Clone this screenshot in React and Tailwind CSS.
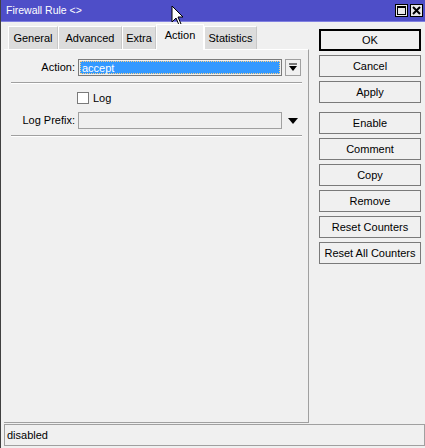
import React from 'react';

const tabs = [
  { label: 'General', w: 'w-[50px]' },
  { label: 'Advanced', w: 'w-[64px]' },
  { label: 'Extra', w: 'w-[34px]' },
  { label: 'Action', w: 'w-[48px]' },
  { label: 'Statistics', w: 'w-[53px]' },
];

const buttons = [
  { label: 'OK', primary: true },
  { label: 'Cancel' },
  { label: 'Apply', gapAfter: true },
  { label: 'Enable' },
  { label: 'Comment' },
  { label: 'Copy' },
  { label: 'Remove' },
  { label: 'Reset Counters' },
  { label: 'Reset All Counters' },
];

const Cursor = () => (
  <svg className="absolute left-[170px] top-[5px]" width="14" height="22" viewBox="0 0 14 22">
    <path d="M1 1 L1 17 L5 13 L8 20 L10 19 L7 12 L12 12 Z" fill="#fff" stroke="#000" strokeWidth="1" />
  </svg>
);

export default function App() {
  return (
    <div className="relative w-[425px] h-[448px] bg-[#f0f0f0] text-[11px] text-black overflow-hidden border-l border-[#404040]" style={{ fontFamily: '"Liberation Sans", Arial, sans-serif' }}>
      {/* title bar */}
      <div className="h-[22px] bg-[#4e4ec8] flex items-center justify-between pl-[5px] pr-[2px] border-b border-[#8080e0]">
        <span className="text-white text-[10.5px]">Firewall Rule &lt;&gt;</span>
        <div className="flex gap-[2px]">
          <div className="w-[13px] h-[13px] bg-[#e8e8e8] border border-black flex items-center justify-center">
            <div className="w-[9px] h-[9px] border border-black border-t-2" />
          </div>
          <div className="w-[13px] h-[13px] bg-[#e8e8e8] border border-black flex items-center justify-center">
            <svg width="9" height="9" viewBox="0 0 9 9">
              <path d="M1 1 L8 8 M8 1 L1 8" stroke="#000" strokeWidth="2" />
            </svg>
          </div>
        </div>
      </div>
      <Cursor />

      <div className="flex">
        {/* left: tabs + panel */}
        <div className="w-[308px] pl-[3px]">
          <div className="flex items-end h-[27px] pl-[4px]">
            {tabs.map((t) =>
              t.label === 'Action' ? (
                <div key={t.label} className={t.w + ' h-[26px] flex items-center justify-center bg-[#f0f0f0] border-t border-l border-r border-white -mb-px relative z-10 pb-[4px]'}>
                  {t.label}
                </div>
              ) : (
                <div key={t.label} className={t.w + ' h-[23px] flex items-center justify-center bg-[#dcdcdc] border-t border-l border-white border-r border-r-[#c8c8c8]'}>
                  {t.label}
                </div>
              )
            )}
          </div>
          <div className="h-[374px] border-t border-white border-r border-r-[#a0a0a0] border-b border-b-[#a0a0a0] pt-[9px] pr-[6px]">
            <div className="flex items-center h-[17px]">
              <span className="w-[74px] text-right pr-[3px]">Action:</span>
              <div className="w-[204px] h-[17px] border border-[#7a7a7a] p-px">
                <div className="h-full bg-[#3399ff] text-white leading-[13px] pl-[1px] border border-dotted border-[#ffd080]">accept</div>
              </div>
              <div className="ml-[3px] w-[16px] h-[17px] border border-[#a0a0a0] bg-[#f0f0f0] flex items-center justify-center">
                <svg width="8" height="9" viewBox="0 0 8 9">
                  <path d="M0 1 H8" stroke="#000" />
                  <path d="M0 3 H8 L4 8 Z" fill="#000" />
                </svg>
              </div>
            </div>
            <div className="ml-[7px] mt-[6px] h-[2px] border-t border-[#a0a0a0] border-b border-b-white w-[291px]" />
            <div className="flex items-center mt-[7px] h-[14px] pl-[73px]">
              <div className="w-[12px] h-[12px] border border-[#7a7a7a] bg-white" />
              <span className="ml-[4px]">Log</span>
            </div>
            <div className="flex items-center mt-[7px] h-[17px]">
              <span className="w-[74px] text-right pr-[3px]">Log Prefix:</span>
              <div className="w-[204px] h-[17px] border border-[#a0a0a0] bg-[#f0f0f0]" />
              <div className="ml-[3px] w-[16px] h-[17px] flex items-center justify-center">
                <svg width="10" height="6" viewBox="0 0 10 6">
                  <path d="M0 0 H10 L5 6 Z" fill="#000" />
                </svg>
              </div>
            </div>
            <div className="ml-[7px] mt-[6px] h-[2px] border-t border-[#a0a0a0] border-b border-b-white w-[291px]" />
          </div>
        </div>

        {/* right: buttons */}
        <div className="flex flex-col ml-[10px] pt-[7px] gap-[4px]">
          {buttons.map((b) => (
            <div
              key={b.label}
              className={
                (b.primary
                  ? 'border-2 border-black '
                  : 'border border-[#7a7a7a] ') +
                'w-[102px] h-[22px] flex items-center justify-center bg-[#f0f0f0] ' +
                (b.gapAfter ? 'mb-[5px]' : '')
              }
            >
              {b.label}
            </div>
          ))}
        </div>
      </div>

      {/* status bar */}
      <div className="absolute left-[3px] right-0 top-[424px] h-[22px] border border-[#a0a0a0] flex items-center pl-[2px]">
        disabled
      </div>
    </div>
  );
}
